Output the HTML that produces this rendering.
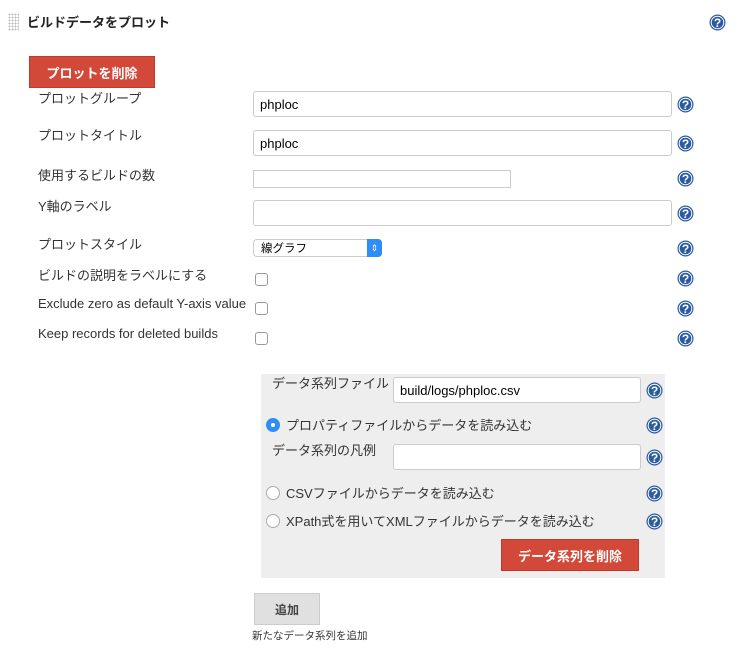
<!DOCTYPE html>
<html><head><meta charset="utf-8"><style>
body{margin:0;width:744px;height:651px;background:#fff;font-family:"Liberation Sans","Noto Sans CJK JP",sans-serif;font-size:13px;color:#333;position:relative;overflow:hidden}
.a{position:absolute;white-space:nowrap}
.lbl{font-size:13px;color:#333}
.inp{position:absolute;background:#fff;border:1px solid #ccc;border-radius:3px;box-sizing:border-box;font-size:13px;color:#000;padding-left:6px;display:flex;align-items:center}
.h{position:absolute;width:17px;height:17px}
.cb{position:absolute;width:11px;height:11px;border:1px solid #999;border-radius:3px;background:#fff}
.rd{position:absolute;width:12px;height:12px;border:1px solid #aaa;border-radius:50%;background:#fff}
.btn{position:absolute;background:#d24939;color:#fff;font-weight:bold;font-size:13px;display:flex;align-items:center;justify-content:center;border:1px solid #c0392b;box-sizing:border-box}
</style></head><body>
<svg width="0" height="0" style="position:absolute"><defs><symbol id="q" viewBox="0 0 17 17"><circle cx="8.5" cy="8.5" r="8" fill="#2a5aa0"/><circle cx="8.5" cy="8.5" r="6.3" fill="none" stroke="#fff" stroke-width="1"/><text x="8.5" y="13" font-family="Liberation Sans" font-weight="bold" font-size="12" fill="#fff" text-anchor="middle">?</text></symbol></defs></svg>
<div class="a" style="left:8px;top:13px;width:11px;height:18px;background-image:radial-gradient(#bbb 0.8px,transparent 0.9px);background-size:3px 3px"></div>
<div class="a" style="left:27px;top:12px;font-weight:bold;font-size:13px;color:#222">ビルドデータをプロット</div>
<svg class="h" style="left:709px;top:14px"><use href="#q"/></svg>
<div class="btn" style="left:29px;top:56px;width:126px;height:32px">プロットを削除</div>

<div class="a lbl" style="left:38px;top:88px">プロットグループ</div>
<div class="inp" style="left:253px;top:91px;width:419px;height:26px">phploc</div>
<svg class="h" style="left:677px;top:96px"><use href="#q"/></svg>

<div class="a lbl" style="left:38px;top:125px">プロットタイトル</div>
<div class="inp" style="left:253px;top:130px;width:419px;height:26px">phploc</div>
<svg class="h" style="left:677px;top:135px"><use href="#q"/></svg>

<div class="a lbl" style="left:38px;top:165px">使用するビルドの数</div>
<div class="inp" style="left:253px;top:170px;width:258px;height:18px;border-radius:0"></div>
<svg class="h" style="left:677px;top:170px"><use href="#q"/></svg>

<div class="a lbl" style="left:38px;top:196px">Y軸のラベル</div>
<div class="inp" style="left:253px;top:200px;width:419px;height:26px"></div>
<svg class="h" style="left:677px;top:205px"><use href="#q"/></svg>

<div class="a lbl" style="left:38px;top:234px">プロットスタイル</div>
<div class="inp" style="left:253px;top:239px;width:129px;height:18px;font-size:11.5px;border-radius:4px;padding-left:7px">線グラフ</div>
<div class="a" style="left:367px;top:239px;width:15px;height:18px;background:#2f8ef5;border-radius:0 4px 4px 0;color:#fff;font-size:9px;line-height:18px;text-align:center">⇕</div>
<svg class="h" style="left:677px;top:240px"><use href="#q"/></svg>

<div class="a lbl" style="left:38px;top:265px">ビルドの説明をラベルにする</div>
<div class="cb" style="left:255px;top:273px"></div>
<svg class="h" style="left:677px;top:270px"><use href="#q"/></svg>

<div class="a lbl" style="left:38px;top:296px">Exclude zero as default Y-axis value</div>
<div class="cb" style="left:255px;top:302px"></div>
<svg class="h" style="left:677px;top:300px"><use href="#q"/></svg>

<div class="a lbl" style="left:38px;top:326px">Keep records for deleted builds</div>
<div class="cb" style="left:255px;top:332px"></div>
<svg class="h" style="left:677px;top:330px"><use href="#q"/></svg>

<div class="a" style="left:261px;top:374px;width:404px;height:204px;background:#eee"></div>
<div class="a lbl" style="left:272px;top:373px">データ系列ファイル</div>
<div class="inp" style="left:393px;top:377px;width:248px;height:26px">build/logs/phploc.csv</div>
<svg class="h" style="left:646px;top:382px"><use href="#q"/></svg>

<div class="rd" style="left:266px;top:418px;background:#2f8ef5;border-color:#2f8ef5"></div>
<div class="a" style="left:271px;top:423px;width:4px;height:4px;border-radius:50%;background:#fff"></div>
<div class="a lbl" style="left:286px;top:415px">プロパティファイルからデータを読み込む</div>
<svg class="h" style="left:646px;top:417px"><use href="#q"/></svg>

<div class="a lbl" style="left:272px;top:440px">データ系列の凡例</div>
<div class="inp" style="left:393px;top:444px;width:248px;height:26px"></div>
<svg class="h" style="left:646px;top:449px"><use href="#q"/></svg>

<div class="rd" style="left:266px;top:486px"></div>
<div class="a lbl" style="left:286px;top:483px">CSVファイルからデータを読み込む</div>
<svg class="h" style="left:646px;top:485px"><use href="#q"/></svg>

<div class="rd" style="left:266px;top:514px"></div>
<div class="a lbl" style="left:286px;top:511px">XPath式を用いてXMLファイルからデータを読み込む</div>
<svg class="h" style="left:646px;top:513px"><use href="#q"/></svg>

<div class="btn" style="left:501px;top:539px;width:138px;height:32px">データ系列を削除</div>

<div class="a" style="left:254px;top:593px;width:66px;height:32px;background:#e0e0e0;border:1px solid #ccc;box-sizing:border-box;font-weight:bold;font-size:12px;color:#444;display:flex;align-items:center;justify-content:center">追加</div>
<div class="a" style="left:252px;top:628px;font-size:10.5px;color:#333">新たなデータ系列を追加</div>
</body></html>
